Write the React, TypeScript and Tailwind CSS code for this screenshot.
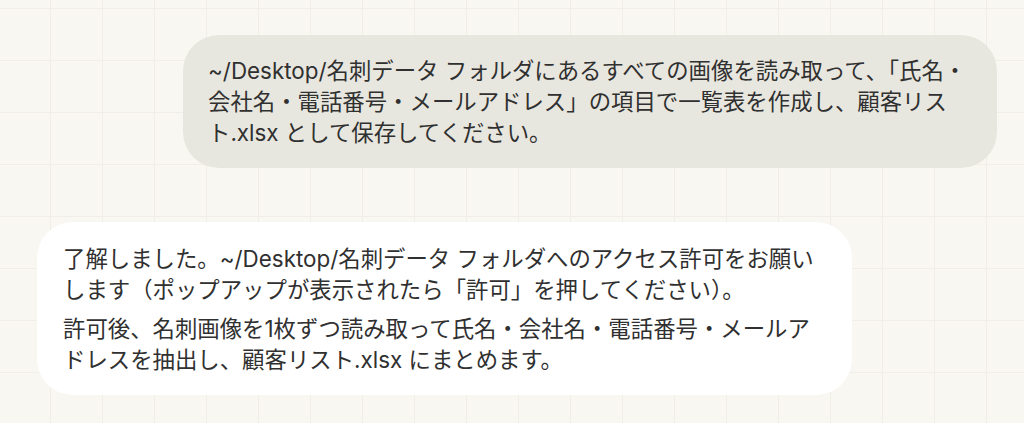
import React from 'react';

const font = { fontFamily: 'Inter, "Noto Sans CJK JP", sans-serif' };

function UserBubble({ text }: { text: string }) {
  return (
    <div className="flex justify-end pr-[27px]">
      <div className="w-[814px] rounded-[36px] bg-[#e8e7df] py-[20px] pl-[25px] pr-[29px] text-[22.4px] leading-[31px] text-[#303030]">
        {text}
      </div>
    </div>
  );
}

function AssistantBubble({ paragraphs }: { paragraphs: string[] }) {
  return (
    <div className="flex justify-start pl-[37px]">
      <div className="flex w-[815px] flex-col gap-[8px] rounded-[36px] bg-white pt-[21px] pb-[20px] pl-[26px] pr-[29px] text-[22.4px] leading-[31px] text-[#303030]">
        {paragraphs.map((p, i) => (
          <p key={i}>{p}</p>
        ))}
      </div>
    </div>
  );
}

export default function App() {
  return (
    <div
      style={font}
      className="h-[423px] w-full overflow-hidden bg-[#f9f7f2] bg-[linear-gradient(to_right,#f1eee7_1px,transparent_1px),linear-gradient(to_bottom,#f1eee7_1px,transparent_1px)] bg-[size:52px_52px] bg-[position:50px_8px] pt-[35px]"
    >
      <div className="flex flex-col gap-[54px]">
        <UserBubble text="~/Desktop/名刺データ フォルダにあるすべての画像を読み取って、「氏名・会社名・電話番号・メールアドレス」の項目で一覧表を作成し、顧客リスト.xlsx として保存してください。" />
        <AssistantBubble
          paragraphs={[
            '了解しました。~/Desktop/名刺データ フォルダへのアクセス許可をお願いします（ポップアップが表示されたら「許可」を押してください）。',
            '許可後、名刺画像を1枚ずつ読み取って氏名・会社名・電話番号・メールアドレスを抽出し、顧客リスト.xlsx にまとめます。',
          ]}
        />
      </div>
    </div>
  );
}
